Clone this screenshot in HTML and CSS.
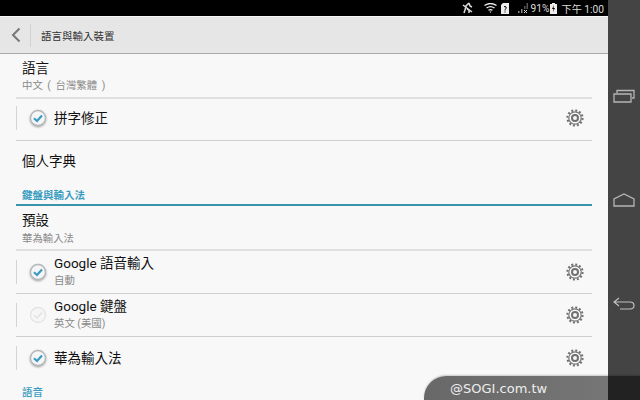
FILE: index.html
```html
<!DOCTYPE html>
<html lang="zh-Hant">
<head>
    <meta charset="UTF-8">
    <title>語言與輸入裝置</title>
    <link rel="stylesheet" href="styles.css">
</head>
<body>
    <div class="screen">
        <div class="main">
            <div class="status-bar">
                <svg class="st-icon" width="12" height="12" viewBox="0 0 12 12"><path d="M7 1 4 4 3 8l-1 3M7 1l1 3 2 1M5 7l2 1 0 3M1 3l9 7" fill="none" stroke="#ddd" stroke-width="1.5"/></svg>
                <svg class="st-wifi" width="13" height="10" viewBox="0 0 13 10"><path d="M0.5 2.5Q6.5-1.5 12.5 2.5M2.5 5Q6.5 2.2 10.500 5M4.500 7.300Q6.500 6 8.500 7.300" fill="none" stroke="#eee" stroke-width="1.300"/><path d="M5.500 8.500h2L6.500 10z" fill="#eee"/></svg>
                <svg class="st-sim" width="8" height="11" viewBox="0 0 8 11"><path d="M0 2 2 0h6v11H0z" fill="#eee"/><path d="M3 4q1-1.500 2 0t-1 2.500v1M4 8.500v1" fill="none" stroke="#000"/></svg>
                <svg class="st-signal" width="10" height="10" viewBox="0 0 10 10"><path d="M0 8h1.500v2H0zM3 6h1.500v4H3z" fill="#888"/><path d="M6 3h1.500v3H6zM8.500 0H10v6H8.500z" fill="#555"/><path d="M6 7l3 3M9 7l-3 3" stroke="#ddd"/></svg>
                <span class="st-batt">91%</span>
                <svg class="st-charge" width="7" height="11" viewBox="0 0 7 11"><path d="M2 0h3v1h2v10H0V1h2z" fill="#eee"/><path d="M4 2 2 6h1.500L3 9l2-4H3.500z" fill="#000"/></svg>
                <span class="st-time">下午 1:00</span>
            </div>

            <div class="action-bar">
                <svg class="back" width="10" height="16" viewBox="0 0 10 16"><path d="M8.500 1.500 2 8l6.500 6.500" fill="none" stroke="#777" stroke-width="2"/></svg>
                <div class="action-sep"></div>
                <div class="action-title">語言與輸入裝置</div>
            </div>

            <div class="list">
                <div class="item item-first">
                    <div class="title">語言</div>
                    <div class="sub sub-spaced">中文 ( 台灣繁體 )</div>
                </div>
                <div class="divider thick"></div>

                <div class="check-row row-short">
                    <div class="check-wrap">
                        <svg class="check check-on" width="18" height="18" viewBox="0 0 18 18"><circle cx="9" cy="9" r="7.500" fill="#f4f5f6" stroke="#b4b8bb" stroke-width="1.300"/><path d="M5 9.300 8 12l5-5.500" fill="none" stroke="#3a9ac4" stroke-width="2.200"/></svg>
                    </div>
                    <div class="row-text"><div class="label">拼字修正</div></div>
                    <svg class="gear" width="18" height="18" viewBox="0 0 18 18"><circle cx="9" cy="9" r="6.200" fill="none" stroke="#787878" stroke-width="1.200"/><circle cx="9" cy="9" r="7.600" fill="none" stroke="#707070" stroke-width="2" stroke-dasharray="2 1.980"/><circle cx="9" cy="9" r="3" fill="none" stroke="#707070" stroke-width="2"/></svg>
                </div>
                <div class="divider"></div>

                <div class="item item-plain"><div class="title">個人字典</div></div>

                <div class="section-head">鍵盤與輸入法</div>
                <div class="section-line"></div>

                <div class="item item-default">
                    <div class="title">預設</div>
                    <div class="sub">華為輸入法</div>
                </div>
                <div class="divider thick"></div>

                <div class="check-row">
                    <div class="check-wrap">
                        <svg class="check check-on" width="18" height="18" viewBox="0 0 18 18"><circle cx="9" cy="9" r="7.500" fill="#f4f5f6" stroke="#b4b8bb" stroke-width="1.300"/><path d="M5 9.300 8 12l5-5.500" fill="none" stroke="#3a9ac4" stroke-width="2.200"/></svg>
                    </div>
                    <div class="row-text">
                        <div class="label">Google 語音輸入</div>
                        <div class="sub">自動</div>
                    </div>
                    <svg class="gear" width="18" height="18" viewBox="0 0 18 18"><circle cx="9" cy="9" r="6.200" fill="none" stroke="#787878" stroke-width="1.200"/><circle cx="9" cy="9" r="7.600" fill="none" stroke="#707070" stroke-width="2" stroke-dasharray="2 1.980"/><circle cx="9" cy="9" r="3" fill="none" stroke="#707070" stroke-width="2"/></svg>
                </div>
                <div class="divider"></div>

                <div class="check-row">
                    <div class="check-wrap">
                        <svg class="check" width="18" height="18" viewBox="0 0 18 18"><circle cx="9" cy="9" r="7.500" fill="#f6f6f6" stroke="#e4e4e4" stroke-width="1.300"/><path d="M5 9.300 8 12l5-5.500" fill="none" stroke="#e2e2e2" stroke-width="1.500"/></svg>
                    </div>
                    <div class="row-text">
                        <div class="label">Google 鍵盤</div>
                        <div class="sub">英文 (美國)</div>
                    </div>
                    <svg class="gear" width="18" height="18" viewBox="0 0 18 18"><circle cx="9" cy="9" r="6.200" fill="none" stroke="#787878" stroke-width="1.200"/><circle cx="9" cy="9" r="7.600" fill="none" stroke="#707070" stroke-width="2" stroke-dasharray="2 1.980"/><circle cx="9" cy="9" r="3" fill="none" stroke="#707070" stroke-width="2"/></svg>
                </div>
                <div class="divider"></div>

                <div class="check-row">
                    <div class="check-wrap">
                        <svg class="check check-on" width="18" height="18" viewBox="0 0 18 18"><circle cx="9" cy="9" r="7.500" fill="#f4f5f6" stroke="#b4b8bb" stroke-width="1.300"/><path d="M5 9.300 8 12l5-5.500" fill="none" stroke="#3a9ac4" stroke-width="2.200"/></svg>
                    </div>
                    <div class="row-text"><div class="label">華為輸入法</div></div>
                    <svg class="gear" width="18" height="18" viewBox="0 0 18 18"><circle cx="9" cy="9" r="6.200" fill="none" stroke="#787878" stroke-width="1.200"/><circle cx="9" cy="9" r="7.600" fill="none" stroke="#707070" stroke-width="2" stroke-dasharray="2 1.980"/><circle cx="9" cy="9" r="3" fill="none" stroke="#707070" stroke-width="2"/></svg>
                </div>

                <div class="section-head section-last">語音</div>
            </div>
        </div>

        <div class="nav-bar">
            <svg width="22" height="14" viewBox="0 0 22 14"><path d="M1 5h17v8H1zM4 4V1.500h17V9h-2" fill="none" stroke="#b5b5b5" stroke-width="1.300"/></svg>
            <svg width="22" height="14" viewBox="0 0 22 14"><path d="M1 13V6l10-5 10 5v7z" fill="none" stroke="#b5b5b5" stroke-width="1.300"/></svg>
            <svg width="22" height="14" viewBox="0 0 22 14"><path d="M6 1 1 5l5 4M1 5h16q4 0 4 3.500T17 12H7" fill="none" stroke="#c0c0c0" stroke-width="1.200"/></svg>
        </div>

        <div class="watermark">
            <span class="wm-text">@SOGI.com.tw</span>
            <div class="wm-end"></div>
        </div>
    </div>
</body>
</html>
```

FILE: styles.css
```css
* {
    margin: 0;
    padding: 0;
    box-sizing: border-box;
}

body {
    width: 640px;
    height: 400px;
    overflow: hidden;
    font-family: Roboto, "Noto Sans CJK TC", sans-serif;
}

.screen {
    position: relative;
    display: flex;
    width: 640px;
    height: 400px;
    overflow: hidden;
}

.main {
    width: 608px;
    background: #f8f8f8;
}

.status-bar {
    display: flex;
    align-items: center;
    justify-content: flex-end;
    width: 608px;
    height: 16px;
    padding-right: 4px;
    background: #000;
    color: #ddd;
    font-size: 10.200px;
}

.st-icon {
    margin-right: 10px;
}

.st-wifi {
    margin-right: 4px;
}

.st-sim {
    margin-right: 9px;
}

.st-signal {
    margin-right: 3px;
}

.st-charge {
    margin-right: 4px;
    margin-left: 1px;
}

.action-bar {
    display: flex;
    align-items: center;
    height: 37px;
    margin-top: 1px;
    background: #e6e6e6;
    border-bottom: 1px solid #a8a8a8;
}

.back {
    margin-left: 11px;
}

.action-sep {
    width: 1px;
    height: 23px;
    margin-left: 9px;
    background: #d2d2d2;
}

.action-title {
    margin-left: 10px;
    font-size: 10.500px;
    color: #333;
}

.list {
    margin: 0 16px;
}

.item {
    padding-left: 6px;
}

.item-first {
    height: 43px;
    padding-top: 5px;
}

.item-first .sub {
    margin-top: 1px;
}

.item-plain {
    height: 46px;
    padding-top: 11px;
}

.item-default {
    height: 43px;
    padding-top: 5px;
}

.item-default .sub {
    margin-top: 2px;
}

.title {
    font-size: 13.500px;
    line-height: 18px;
    color: #111;
}

.sub {
    font-size: 10.400px;
    line-height: 15px;
    color: #8a8a8a;
}

.sub-spaced {
    word-spacing: 2px;
}

.divider {
    height: 1px;
    background: #cfcfcf;
}

.divider.thick {
    height: 2px;
    background: #e0e0e0;
}

.check-row {
    display: flex;
    align-items: center;
    height: 42px;
}

.row-short {
    height: 41px;
    padding-bottom: 3px;
}

.check-wrap {
    display: flex;
    align-items: center;
    height: 24px;
    width: 38px;
    padding-left: 12px;
    border-left: 1px solid #d4d4d4;
}

.check-on {
    filter: drop-shadow(0 1px 1px rgba(0, 0, 0, 0.35));
}

.row-text {
    flex: 1;
}

.label {
    font-size: 13.500px;
    line-height: 18px;
    color: #111;
}

.row-text .sub {
    margin-top: 2px;
    margin-bottom: 2px;
    line-height: 14px;
}

.gear {
    margin-right: 8px;
}

.section-head {
    height: 17px;
    padding-left: 6px;
    padding-top: 1px;
    font-size: 10.500px;
    font-weight: 700;
    line-height: 16px;
    color: #3a9dc0;
}

.section-last {
    margin-top: 5px;
    font-weight: 500;
}

.section-line {
    height: 2px;
    background: #3a94ac;
}

.nav-bar {
    display: flex;
    flex-direction: column;
    align-items: center;
    width: 32px;
    height: 400px;
    padding-top: 89px;
    gap: 90px;
    background: #444;
}

.watermark {
    position: absolute;
    right: 0;
    bottom: 0;
    display: flex;
    width: 216px;
    height: 24px;
    padding-left: 26px;
    border-top-left-radius: 22px;
    background: linear-gradient(to right, #686868, #787878);
    box-shadow: 0 -1px 2px rgba(0, 0, 0, 0.2);
    color: #eee;
    font-family: "DejaVu Sans", sans-serif;
    font-size: 13px;
    line-height: 26px;
}

.wm-end {
    position: absolute;
    top: 0;
    right: 0;
    width: 32px;
    height: 24px;
    background: #222;
}
```
